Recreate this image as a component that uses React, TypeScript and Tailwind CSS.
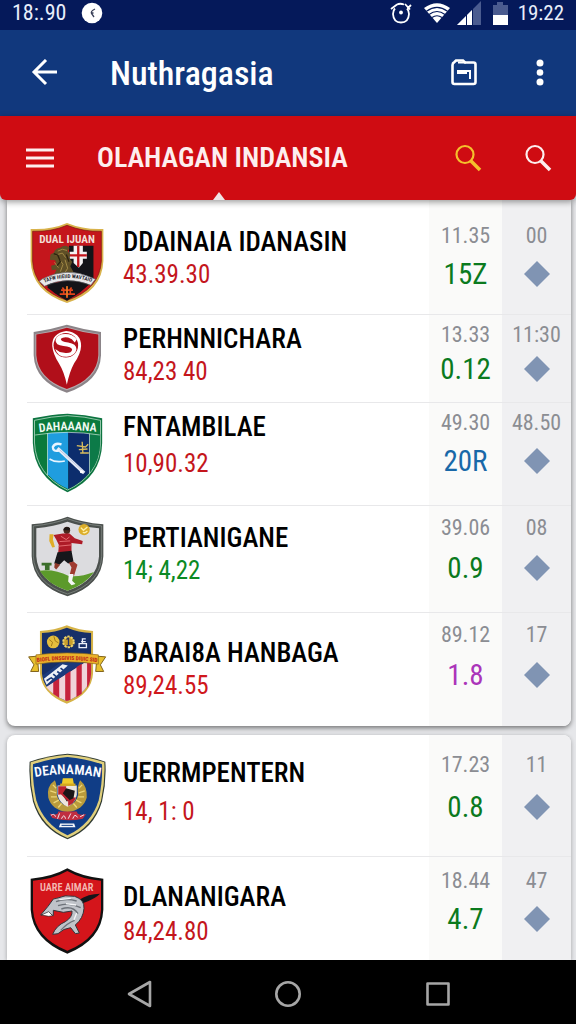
import type { ReactNode } from "react";

type Row = {
  name: string;
  figure: string;
  figureColor: string;
  time: string;
  score: string;
  scoreColor: string;
  extra: string;
  crest: ReactNode;
  rowClass: string;
  crestClass: string;
  nameClass: string;
  statClass: string;
};

const CrestLion = () => (
  <svg viewBox="84 52 228 248" className="h-[82px] w-[76px]" aria-hidden="true">
    <path d="M88 73Q150 76 198 55Q250 76 308 73V170Q305 262 198 297Q92 262 88 170Z" fill="#d9b34c" />
    <path d="M94 80Q152 82 198 62Q248 82 302 80V170Q297 256 198 289Q98 256 94 170Z" fill="#c4161c" stroke="#7a1512" strokeWidth="2" />
    <path d="M204 124H278V232L198 290L138 250L204 220Z" fill="#141418" />
    <path d="M130 236L270 232Q244 268 198 288Q156 272 130 236Z" fill="#141418" />
    <path d="M218 124H246V142H258V163H246V176L234 190L218 176V163H206V142H218Z" fill="#f4f2f2" />
    <path d="M232 124V188M206 153H258" stroke="#c4161c" strokeWidth="7" />
    <path
      d="M158 145Q162 132 178 130Q192 118 206 130L200 140L208 150L204 160L214 172L208 186L218 204L206 214H158L166 196L152 198L150 184L166 180L162 168L146 166L148 150Z"
      fill="#5f4f26"
    />
    <path d="M170 140Q184 130 198 138M164 152L184 146L194 160M174 164L186 180L178 202M192 166L200 192L190 208M160 174L172 190" stroke="#a28a45" strokeWidth="3" fill="none" />
    <path d="M158 148L170 152L178 172L168 184M196 150L204 172" stroke="#2c2411" strokeWidth="4" fill="none" />
    <path d="M114 231L124 224Q198 186 272 220L284 225L270 243Q198 214 130 246Z" fill="#e9e9ea" stroke="#5b5b60" strokeWidth="2" />
    <path id="lion-band" d="M124 238Q198 206 278 236" fill="none" />
    <text fontSize="16" fontWeight="700" fill="#2a2a30">
      <textPath href="#lion-band" startOffset="50%" textAnchor="middle">
        TAFW HIEIID WAVTAIO
      </textPath>
    </text>
    <path d="M176 270H222M180 258H216M188 258V268M198 246V282M208 258V268M184 250L190 258M212 250L206 258" stroke="#e2451b" strokeWidth="5" />
    <path d="M198 246V278" stroke="#f0a52a" strokeWidth="3" />
    <text x="198" y="115" textAnchor="middle" fontSize="34" fontWeight="700" fill="#f3dfd6">
      DUAL IJUAN
    </text>
  </svg>
);

const CrestPin = () => (
  <svg viewBox="98 356 208 208" className="h-[69px] w-[69px]" aria-hidden="true">
    <path d="M100 380Q154 372 200 358Q248 372 303 380V450Q300 530 200 563Q104 530 100 450Z" fill="#8b8488" />
    <path d="M105 386Q156 378 200 364Q246 378 298 386V450Q294 524 200 556Q110 524 105 450Z" fill="#b5a9ad" />
    <path d="M108 388Q156 381 200 367Q246 381 295 388V450Q291 521 200 552Q113 521 108 450Z" fill="#b10f1a" />
    <path d="M156 422Q154 384 198 377Q243 382 243 422Q242 446 222 474Q208 500 200 539Q192 500 176 474Q158 446 156 422Z" fill="#fff" />
    <circle cx="197" cy="420" r="37" fill="#b10f1a" />
    <path
      d="M230 402Q218 386 196 386Q170 386 166 404Q165 420 190 422Q214 424 216 433Q214 446 192 443Q176 441 165 431Q172 456 200 455Q226 452 229 432Q229 416 204 412Q182 409 182 402Q188 394 204 397Q216 400 224 412Z"
      fill="#fff"
    />
    <path d="M164 416Q176 430 200 430Q210 431 212 436M184 400Q196 404 210 406" stroke="#b10f1a" strokeWidth="3" fill="none" />
  </svg>
);

const CrestHockey = () => (
  <svg viewBox="96 40 212 240" className="h-20 w-[71px]" aria-hidden="true">
    <path d="M98 56Q152 44 202 42Q254 44 306 56V130Q304 232 202 278Q102 232 98 130Z" fill="#0c7440" />
    <path d="M103 62Q154 50 202 48Q252 50 301 62V130Q298 226 202 271Q108 226 103 130Z" fill="#0a7a3c" stroke="#d8efe0" strokeWidth="2" />
    <path d="M142 101Q172 97 204 97V268Q170 254 142 224Z" fill="#1f9ddf" />
    <path d="M204 97Q238 97 270 102V216Q240 252 204 268Z" fill="#0c2d6d" />
    <path d="M268 102L300 104V130Q298 186 268 218Z" fill="#0c7a48" />
    <path d="M105 106Q202 90 299 106M142 101V226M268 102V220" stroke="#d8efe0" strokeWidth="2" fill="none" />
    <path d="M172 146L252 220" stroke="#e6ebf7" strokeWidth="10" />
    <path d="M178 150L248 214" stroke="#a9b5d4" strokeWidth="2" />
    <path d="M178 152Q158 158 158 142Q164 128 184 134" stroke="#e8f4ff" strokeWidth="7" fill="none" />
    <path d="M148 178Q166 190 194 184" stroke="#e8f4ff" strokeWidth="5" fill="none" />
    <circle cx="244" cy="216" r="5" fill="#fff" />
    <path d="M230 138L256 142L264 134M246 126L248 158M236 150L262 148M240 160H266" stroke="#d8bd5e" strokeWidth="4" fill="none" />
    <path id="hockey-arc" d="M108 99Q202 84 298 98" fill="none" />
    <text fontSize="36" fontWeight="600" fill="#f2fbf4">
      <textPath href="#hockey-arc" startOffset="50%" textAnchor="middle">
        DAHAAANA
      </textPath>
    </text>
  </svg>
);

const CrestPlayer = () => (
  <svg viewBox="90 350 220 242" className="h-[81px] w-[73px]" aria-hidden="true">
    <path d="M92 374Q158 368 200 351Q242 368 308 374V470Q304 558 200 591Q96 558 92 470Z" fill="#4b504d" />
    <path d="M97 379Q158 373 200 357Q242 373 303 379V470Q299 552 200 584Q101 552 97 470Z" fill="none" stroke="#8d9490" strokeWidth="2" />
    <path d="M106 386Q160 380 200 366Q240 380 295 386V470Q290 544 200 574Q110 544 106 470Z" fill="#dcdcdf" />
    <path d="M116 514Q160 508 204 530Q240 534 280 518Q254 556 200 574Q142 556 116 514Z" fill="#5c9a2b" />
    <path d="M122 490H152V498H146V512H132V498H122Z" fill="#3c6f2b" />
    <circle cx="250" cy="390" r="17" fill="#dcae2b" />
    <path d="M240 384L248 392L260 382M246 398Q254 402 260 394" stroke="#fff0a8" strokeWidth="4" fill="none" />
    <ellipse cx="198" cy="392" rx="10" ry="11" fill="#4a2a1e" />
    <path d="M188 388Q196 378 208 386L206 392H188Z" fill="#1c1513" />
    <path d="M146 404H158L156 420L162 442L154 444L145 424Z" fill="#e0ad27" />
    <path d="M158 406L186 402L206 402L222 416L246 424L244 434L212 430L212 456L172 460L174 436L166 420Z" fill="#ae1b27" />
    <path d="M172 440L212 436M180 410L196 420L206 412M176 426L208 424" stroke="#e46a6f" strokeWidth="3" fill="none" />
    <path d="M170 458L212 454L218 486L202 492L190 482L176 496L160 492Z" fill="#16171b" />
    <path d="M162 490L178 496L166 510L160 504Z" fill="#8e3a2a" />
    <path d="M204 490L218 486L230 496L220 528H206L212 504Z" fill="#a03b30" />
    <path d="M204 524H218L214 544L224 554L212 558L202 546Z" fill="#f5f6f6" />
  </svg>
);

const CrestStripes = () => (
  <svg viewBox="84 64 238 238" className="h-[79px] w-[79px]" aria-hidden="true">
    <path d="M120 82Q164 80 201 65Q238 80 280 82V210Q276 272 201 301Q126 272 120 210Z" fill="#d6b347" />
    <path d="M126 88Q166 86 201 72Q236 86 274 88V210Q270 266 201 293Q132 266 126 210Z" fill="#172f68" />
    <path d="M254 178L274 178V212Q270 266 201 293Q160 278 138 250Z" fill="#f0d3da" />
    <path d="M160 230L178 214V283L160 272ZM196 202L212 190V289L201 293L196 291ZM230 180H246V271L230 281ZM262 178H274V212Q272 238 262 254Z" fill="#c6223c" />
    <path d="M128 216L180 178H250L140 250Q130 234 128 216Z" fill="#1c3a7c" />
    <path d="M132 226L188 182L204 186L140 244Z" fill="#eef1f7" />
    <path d="M140 232L152 224M152 222L160 228M160 212L170 220M172 204L180 210M182 194L190 200" stroke="#1c3a7c" strokeWidth="5" />
    <path d="M86 160L112 158L116 204H92L102 184Z" fill="#e8c02e" stroke="#80621a" strokeWidth="3" />
    <path d="M318 160L292 158L288 204H312L302 184Z" fill="#e8c02e" stroke="#80621a" strokeWidth="3" />
    <path d="M108 154Q202 142 296 154V182Q202 168 108 182Z" fill="#ebb129" stroke="#8c6b1b" strokeWidth="2" />
    <path id="stripe-band" d="M110 176Q202 163 294 176" fill="none" />
    <text fontSize="17" fontWeight="800" fill="#c02a1b">
      <textPath href="#stripe-band" startOffset="50%" textAnchor="middle">
        BIOFL DNSGIVIS DIUIC SID
      </textPath>
    </text>
    <circle cx="160" cy="115" r="19" fill="#e3bd3d" />
    <path d="M148 108L158 116L154 128M162 98L166 112L176 118" stroke="#a27a18" strokeWidth="3" fill="none" />
    <circle cx="206" cy="115" r="16" fill="#c99f2c" stroke="#efd46a" strokeWidth="6" strokeDasharray="7 3" />
    <path d="M206 102V126M200 126H212M200 108L206 102" stroke="#2b3560" strokeWidth="4" fill="none" />
    <path d="M238 132H260V120H238ZM248 120V106H258M244 114H258" stroke="#e9eef8" strokeWidth="4" fill="none" />
  </svg>
);

const CrestWreath = () => (
  <svg viewBox="24 24 232 262" className="h-[87px] w-[77px]" aria-hidden="true">
    <path d="M26 50Q84 30 140 26Q198 30 254 50Q258 110 244 170Q220 252 140 284Q60 252 36 170Q22 110 26 50Z" fill="#2f3a33" />
    <path d="M29 52Q86 33 140 29Q196 33 251 52Q254 110 241 168Q217 248 140 280Q63 248 39 168Q26 110 29 52Z" fill="#e0cf7c" />
    <path d="M36 58Q88 40 140 36Q192 40 244 58Q246 110 234 166Q212 238 140 272Q68 238 46 166Q34 110 36 58Z" fill="#103d86" />
    <path d="M102 106Q76 124 82 158Q92 196 140 202Q188 196 198 158Q200 124 178 106Q168 124 172 150Q166 178 140 184Q114 178 108 150Q110 124 102 106Z" fill="#b99b3c" />
    <path d="M96 120L106 130M88 138L106 144M90 156L108 156M98 174L114 166M112 188L122 176M184 120L174 130M192 138L174 144M190 156L172 156M182 174L166 166M168 188L158 176" stroke="#ecd678" strokeWidth="4" />
    <path d="M110 122H168V150Q164 176 140 186Q116 176 110 150Z" fill="#ece5dc" />
    <path d="M112 124H136V146L112 150ZM142 158H166Q160 176 142 184Z" fill="#bb2330" />
    <path d="M136 130L162 138L158 160L138 170L124 148Z" fill="#1a1518" />
    <path d="M120 144L144 168" stroke="#bb2330" strokeWidth="6" />
    <path d="M126 100H156L160 122H122Z" fill="#f0cc2c" />
    <path d="M118 116H164V123H118Z" fill="#d4a81f" />
    <path d="M86 206Q112 214 112 200H168Q170 214 196 208L186 222Q140 232 94 220Z" fill="#c02d40" />
    <path d="M90 212Q100 204 104 216M110 222L116 206M122 222Q130 204 134 222M142 222L150 206M156 222Q162 204 170 218M178 216L190 210" stroke="#f0e6ec" strokeWidth="3" fill="none" />
    <path d="M118 236H160L164 248H114Z" fill="#f4f6fa" />
    <path d="M122 242H156" stroke="#103d86" strokeWidth="3" />
    <path id="wreath-arc" d="M40 97Q140 78 242 98" fill="none" />
    <text fontSize="41" fontWeight="600" fill="#fbfcff">
      <textPath href="#wreath-arc" startOffset="50%" textAnchor="middle">
        DEANAMAN
      </textPath>
    </text>
  </svg>
);

const CrestWolf = () => (
  <svg viewBox="88 205 222 258" className="h-[86px] w-[74px]" aria-hidden="true">
    <path d="M90 237Q154 232 200 206Q246 232 308 237V330Q304 420 200 462Q96 420 90 330Z" fill="#111" />
    <path d="M97 243Q156 239 200 214Q244 239 301 243V330Q297 414 200 453Q103 414 97 330Z" fill="#d4151b" />
    <path d="M236 300Q262 282 298 282Q286 296 248 310Z" fill="#15151a" />
    <path
      d="M120 346L142 320L158 298L168 296Q192 284 222 290Q252 300 250 326Q248 356 224 376L236 400L224 402L210 384Q188 386 172 402L156 404Q166 378 194 366Q216 352 214 334L188 338L158 332L158 348L146 342Z"
      fill="#bfc3c9"
      stroke="#33363c"
      strokeWidth="3"
    />
    <path d="M122 346L144 336L156 348L144 350Z" fill="#fff" stroke="#222" strokeWidth="2" />
    <path d="M166 306Q196 294 228 304M172 318Q206 306 240 324M182 328Q216 316 232 342M222 362Q200 370 180 392" stroke="#6d7279" strokeWidth="4" fill="none" />
    <path d="M176 300L210 296M196 312L226 316M228 340L220 360" stroke="#f4f6f8" strokeWidth="4" />
    <text x="198" y="273" textAnchor="middle" fontSize="31" fontWeight="600" fill="#f3b9b4">
      UARE AIMAR
    </text>
  </svg>
);

const FIRST: Row[] = [
  {
    name: "DDAINAIA IDANASIN", figure: "43.39.30", figureColor: "text-[#c4161c]",
    time: "11.35", score: "15Z", scoreColor: "text-[#0b7a1e]", extra: "00",
    crest: <CrestLion />,
    rowClass: "h-[115px]", crestClass: "pt-[22px]", nameClass: "pt-[26px]", statClass: "pt-6 gap-2.5",
  },
  {
    name: "PERHNNICHARA", figure: "84,23 40", figureColor: "text-[#c4161c]",
    time: "13.33", score: "0.12", scoreColor: "text-[#0b7a1e]", extra: "11:30",
    crest: <CrestPin />,
    rowClass: "h-[88px]", crestClass: "pt-[9px]", nameClass: "pt-2", statClass: "pt-2 gap-1.5",
  },
  {
    name: "FNTAMBILAE", figure: "10,90.32", figureColor: "text-[#c4161c]",
    time: "49.30", score: "20R", scoreColor: "text-[#1868a8]", extra: "48.50",
    crest: <CrestHockey />,
    rowClass: "h-[103px]", crestClass: "pt-2.5", nameClass: "pt-2 gap-1", statClass: "pt-2 gap-2.5",
  },
  {
    name: "PERTIANIGANE", figure: "14; 4,22", figureColor: "text-[#0b8a24]",
    time: "39.06", score: "0.9", scoreColor: "text-[#0b7a1e]", extra: "08",
    crest: <CrestPlayer />,
    rowClass: "h-[107px]", crestClass: "pt-2.5", nameClass: "pt-4", statClass: "pt-2.5 gap-3",
  },
  {
    name: "BARAI8A HANBAGA", figure: "89,24.55", figureColor: "text-[#d0181c]",
    time: "89.12", score: "1.8", scoreColor: "text-[#ab35ba]", extra: "17",
    crest: <CrestStripes />,
    rowClass: "h-[113px]", crestClass: "pt-3", nameClass: "pt-6", statClass: "pt-2.5 gap-3",
  },
];

const SECOND: Row[] = [
  {
    name: "UERRMPENTERN", figure: "14, 1: 0", figureColor: "text-[#c4161c]",
    time: "17.23", score: "0.8", scoreColor: "text-[#0b7a1e]", extra: "11",
    crest: <CrestWreath />,
    rowClass: "h-[122px]", crestClass: "pt-[18px]", nameClass: "pt-[22px] gap-1.5", statClass: "pt-[18px] gap-3.5",
  },
  {
    name: "DLANANIGARA", figure: "84,24.80", figureColor: "text-[#c4161c]",
    time: "18.44", score: "4.7", scoreColor: "text-[#0b7a1e]", extra: "47",
    crest: <CrestWolf />,
    rowClass: "h-[103px]", crestClass: "pt-[11px]", nameClass: "pt-6 gap-0.5", statClass: "pt-3 gap-2.5",
  },
];

const TeamRow = ({ row, last }: { row: Row; last: boolean }) => {
  const line = last ? "" : "border-b border-[#e8e8ea]";
  return (
    <li className={`flex pl-5 ${row.rowClass}`}>
      <div className={`flex w-20 shrink-0 justify-center ${row.crestClass} ${line}`}>{row.crest}</div>
      <div className={`flex min-w-0 flex-1 flex-col whitespace-nowrap pl-4 ${row.nameClass} ${line}`}>
        <h2 className="text-[27px] font-medium leading-8 text-black">{row.name}</h2>
        <p className={`text-[25px] leading-[34px] ${row.figureColor}`}>{row.figure}</p>
      </div>
      <div className={`flex w-[73px] shrink-0 flex-col items-center bg-[#fafaf9] ${row.statClass} ${line}`}>
        <span className="text-[22px] leading-6 text-[#8b8d93]">{row.time}</span>
        <span className={`text-[29px] leading-8 ${row.scoreColor}`}>{row.score}</span>
      </div>
      <div className={`flex w-[69px] shrink-0 flex-col items-center bg-[#f0f0f2] ${row.statClass} ${line}`}>
        <span className="text-[22px] leading-6 text-[#8b8d93]">{row.extra}</span>
        <svg viewBox="0 0 32 32" className="size-8" aria-hidden="true">
          <path d="M16 3L29 16L16 29L3 16Z" fill="#8094b3" />
        </svg>
      </div>
    </li>
  );
};

const SearchIcon = () => (
  <svg viewBox="0 0 28 28" className="size-7" fill="none" stroke="currentColor" aria-hidden="true">
    <circle cx="11" cy="10.500" r="8.500" strokeWidth="2.200" />
    <path d="M17 17L26 26" strokeWidth="3.600" />
  </svg>
);

const StatusBar = () => (
  <div className="flex h-[30px] items-center bg-[#05195a] px-3 pb-1 text-[22px] leading-6 text-[#e8eefa]">
    <span>18:.90</span>
    <svg viewBox="0 0 22 22" className="ml-[15px] size-[22px]" aria-hidden="true">
      <circle cx="11" cy="11" r="10.300" fill="#fff" />
      <path d="M14 7Q9.500 9 10.500 11.500L13 15M10.500 11H12.500" fill="none" stroke="#3a4058" strokeWidth="1.300" />
    </svg>
    <div className="ml-auto flex items-center">
      <svg viewBox="0 0 22 24" className="h-6 w-[22px]" fill="none" stroke="#fff" aria-hidden="true">
        <path d="M5 7.500Q3 9.500 3 13Q3.500 21.500 11 21.500Q18.500 21.500 19 13Q19 9.500 17 7.500" strokeWidth="1.800" />
        <path d="M1 8L7 3.500M7 3.500Q10 2 14 3.500M15 3L20 8.500M17.500 7.500L21 4" strokeWidth="1.800" />
        <circle cx="11" cy="11.500" r="1.900" fill="#fff" stroke="none" />
      </svg>
      <svg viewBox="0 0 26 20" className="ml-3 h-5 w-[26px]" aria-hidden="true">
        <path d="M0 5Q13 -4.500 26 5L13 20Z" fill="#fff" />
        <path d="M2.500 8.200Q13 0.500 23.500 8.200M5 11.500Q13 5.500 21 11.500M8 14.500Q13 11 18 14.500" fill="none" stroke="#05195a" strokeWidth="1.100" />
      </svg>
      <svg viewBox="0 0 24 24" className="ml-[7px] size-6" aria-hidden="true">
        <path d="M24 0V24H0Z" fill="#4a5b8f" />
        <path d="M15 9V24H0Z" fill="#fff" />
        <path d="M9.500 13V24M15.500 8V24" stroke="#05195a" strokeWidth="1" />
      </svg>
      <svg viewBox="0 0 15 23" className="ml-3 h-[23px] w-[15px]" aria-hidden="true">
        <path d="M4 0H10V3H15V14H0V3H4Z" fill="#4a5b8f" />
        <path d="M0 13H15V23H0Z" fill="#fff" />
      </svg>
      <span className="ml-2.5 text-[21px]">19:22</span>
    </div>
  </div>
);

export default function App() {
  return (
    <div className="flex min-h-screen flex-col bg-[#e6e7ea] font-['Roboto_Condensed',Roboto,sans-serif]">
      <StatusBar />
      <header className="flex h-[86px] items-center bg-[#11387d] pl-6 pr-4 text-white">
        <button type="button" aria-label="Back" className="flex w-10 justify-center">
          <svg viewBox="0 0 28 28" className="size-7" fill="none" stroke="currentColor" strokeWidth="3" aria-hidden="true">
            <path d="M27 13H4M16 1L4 13L16 25" />
          </svg>
        </button>
        <h1 className="ml-[46px] flex-1 text-[34px] font-medium leading-10">Nuthragasia</h1>
        <button type="button" aria-label="Folder" className="flex w-10 justify-center">
          <svg viewBox="0 0 28 28" className="size-7" fill="none" stroke="currentColor" strokeWidth="2.600" aria-hidden="true">
            <path d="M2.500 6Q2.500 4 4.500 3L6 1.500H13L15 3.500H23.500Q25.500 3.500 25.500 5.500V23Q25.500 25 23.500 25H4.500Q2.500 25 2.500 23Z" />
            <path d="M7 12H20V20" strokeWidth="2" />
            <path d="M7 14H17" strokeWidth="2" />
            <path d="M8 3.500H16" strokeWidth="2" />
          </svg>
        </button>
        <button type="button" aria-label="More options" className="ml-9 flex w-10 justify-center">
          <svg viewBox="0 0 8 28" className="h-7 w-2" fill="currentColor" aria-hidden="true">
            <circle cx="4" cy="4" r="3.500" />
            <circle cx="4" cy="13.500" r="3.300" />
            <circle cx="4" cy="23" r="3.500" />
          </svg>
        </button>
      </header>

      <nav className="relative z-10 flex h-[84px] items-center rounded-b-md bg-[#cf0c12] pl-5 pr-[18px] text-[#fdeeee] shadow-[0_2px_6px_rgba(0,0,0,0.4)]">
        <button type="button" aria-label="Menu" className="flex w-10 justify-center">
          <svg viewBox="0 0 28 20" className="h-5 w-7" stroke="currentColor" strokeWidth="3" aria-hidden="true">
            <path d="M0 2H28M0 10H28M0 18H28" />
          </svg>
        </button>
        <span className="ml-[37px] flex-1 text-[28px] font-semibold leading-10">OLAHAGAN INDANSIA</span>
        <button type="button" aria-label="Search teams" className="flex w-10 justify-center text-[#f5c02c]">
          <SearchIcon />
        </button>
        <button type="button" aria-label="Search" className="ml-[30px] flex w-10 justify-center">
          <SearchIcon />
        </button>
        <svg viewBox="0 0 12 8" className="absolute bottom-0 left-[213px] h-2 w-3" aria-hidden="true">
          <path d="M6 0L12 8H0Z" fill="#f0e4e4" />
        </svg>
      </nav>

      <main className="flex flex-1 flex-col gap-[9px] pl-[7px] pr-[5px]">
        <ul className="overflow-hidden rounded-b-lg bg-white shadow-[0_2px_5px_rgba(0,0,0,0.5)]">
          {FIRST.map((row, i) => (
            <TeamRow key={row.name} row={row} last={i === FIRST.length - 1} />
          ))}
        </ul>
        <ul className="flex-1 overflow-hidden rounded-t-lg bg-white shadow-[0_1px_4px_rgba(0,0,0,0.3)]">
          {SECOND.map((row, i) => (
            <TeamRow key={row.name} row={row} last={i === SECOND.length - 1} />
          ))}
        </ul>
      </main>

      <footer className="relative flex h-16 items-center justify-center gap-[122px] bg-black pt-1 text-[#a6a6a6]">
        <button type="button" aria-label="Navigate back">
          <svg viewBox="0 0 28 28" className="size-7" fill="none" stroke="currentColor" strokeWidth="2.600" strokeLinejoin="round" aria-hidden="true">
            <path d="M26 2V26L5 14Z" />
          </svg>
        </button>
        <button type="button" aria-label="Home">
          <svg viewBox="0 0 28 28" className="size-7" fill="none" stroke="currentColor" strokeWidth="2.600" aria-hidden="true">
            <circle cx="14" cy="14" r="11.700" />
          </svg>
        </button>
        <button type="button" aria-label="Recent apps">
          <svg viewBox="0 0 28 28" className="size-7" fill="none" stroke="currentColor" strokeWidth="2.600" strokeLinejoin="round" aria-hidden="true">
            <path d="M3.500 3.500H24.500V24.500H3.500Z" />
          </svg>
        </button>
      </footer>
    </div>
  );
}
